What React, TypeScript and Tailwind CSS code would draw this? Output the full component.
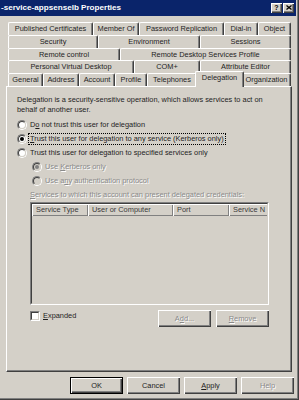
import React from 'react';

// Windows classic 3D edges
const raised = 'shadow-[inset_1px_1px_0_#fff,inset_-1px_-1px_0_#404040,inset_-2px_-2px_0_#808080]';
const sunkenOuter = 'border border-t-[#808080] border-l-[#808080] border-b-white border-r-white';
const sunkenInner = 'border border-t-[#404040] border-l-[#404040] border-b-[#d4d0c8] border-r-[#d4d0c8]';
const disabledText = 'text-[#8a8a8a] [text-shadow:1px_1px_0_#fff]';

const U: React.FC<{ children: React.ReactNode }> = ({ children }) => (
  <span className="underline decoration-1 underline-offset-[1px]">{children}</span>
);

interface TabDef {
  label: string;
  w: string;
}

const tabRows: TabDef[][] = [
  [
    { label: 'Published Certificates', w: 'w-[85px]' },
    { label: 'Member Of', w: 'w-[46px]' },
    { label: 'Password Replication', w: 'w-[85px]' },
    { label: 'Dial-in', w: 'w-[34px]' },
    { label: 'Object', w: 'w-[33px]' },
  ],
  [
    { label: 'Security', w: 'w-[90px]' },
    { label: 'Environment', w: 'w-[102px]' },
    { label: 'Sessions', w: 'w-[91px]' },
  ],
  [
    { label: 'Remote control', w: 'w-[112px]' },
    { label: 'Remote Desktop Services Profile', w: 'w-[171px]' },
  ],
  [
    { label: 'Personal Virtual Desktop', w: 'w-[126px]' },
    { label: 'COM+', w: 'w-[66px]' },
    { label: 'Attribute Editor', w: 'w-[91px]' },
  ],
];

const frontRow: TabDef[] = [
  { label: 'General', w: 'w-[35px]' },
  { label: 'Address', w: 'w-[36px]' },
  { label: 'Account', w: 'w-[36px]' },
  { label: 'Profile', w: 'w-[32px]' },
  { label: 'Telephones', w: 'w-[50px]' },
  { label: 'Delegation', w: 'w-[45px]' },
  { label: 'Organization', w: 'w-[49px]' },
];

const Tab: React.FC<TabDef> = ({ label, w }) => (
  <div
    className={`${w} shrink-0 flex items-center justify-center whitespace-nowrap overflow-hidden rounded-t-[2px] border-t border-l border-r border-t-white border-l-white border-r-[#404040] shadow-[inset_-1px_0_0_#808080]`}
  >
    {label}
  </div>
);

const Radio: React.FC<{ checked?: boolean; disabled?: boolean }> = ({ checked, disabled }) => (
  <span className={`w-[10px] h-[10px] shrink-0 rounded-full flex ${sunkenOuter}`}>
    <span
      className={`w-full h-full rounded-full flex items-center justify-center ${sunkenInner} ${
        disabled ? 'bg-[#d4d0c8]' : 'bg-white'
      }`}
    >
      {checked && <span className={`w-[4px] h-[4px] rounded-full ${disabled ? 'bg-[#808080]' : 'bg-black'}`} />}
    </span>
  </span>
);

const Button: React.FC<{ children: React.ReactNode; disabled?: boolean; isDefault?: boolean }> = ({
  children,
  disabled,
  isDefault,
}) => (
  <div
    className={`w-[53px] h-[17px] shrink-0 flex items-center justify-center bg-[#d4d0c8] ${raised} ${
      isDefault ? 'border border-black' : ''
    } ${disabled ? disabledText : ''}`}
  >
    {children}
  </div>
);

const columns = [
  { label: 'Service Type', w: 'w-[56px]' },
  { label: 'User or Computer', w: 'w-[85px]' },
  { label: 'Port', w: 'w-[56px]' },
  { label: 'Service N', w: 'w-[60px]' },
];

export default function App() {
  return (
    <div className="w-[299px] h-[400px] bg-[#d4d0c8] border-r border-b border-r-[#404040] border-b-[#404040] font-['Liberation_Sans',Arial,sans-serif] text-[7.4px] leading-[10px] text-[#1e1e1e] overflow-hidden">
      <div className="h-full border-r border-b border-r-[#808080] border-b-[#808080] pr-[1px] pb-[1px] flex flex-col">
        {/* title bar */}
        <div className="h-[16px] shrink-0 bg-[#0a246a] flex items-center pl-[1px] pr-[2px]">
          <span className="text-white font-bold text-[8.1px] whitespace-nowrap">-service-appsenselb Properties</span>
          <div className="ml-auto flex gap-[1px]">
            <div className={`w-[11px] h-[10px] bg-[#d4d0c8] ${raised} flex items-center justify-center font-bold text-[7px] leading-none text-black pb-[1px]`}>
              ?
            </div>
            <div className={`w-[11px] h-[10px] bg-[#d4d0c8] ${raised} flex items-center justify-center pb-[1px]`}>
              <svg width="6" height="5" viewBox="0 0 6 5">
                <path d="M0.5 0.5 L5.5 4.5 M5.5 0.5 L0.5 4.5" stroke="#000" strokeWidth="1.3" />
              </svg>
            </div>
          </div>
        </div>

        {/* tabs */}
        <div className="mt-[6px] ml-[8px] w-[283px] flex flex-col">
          {tabRows.map((row, i) => (
            <div key={i} className={`flex ${i === 2 ? 'h-[12px]' : 'h-[13px]'}`}>
              {row.map((t) => (
                <Tab key={t.label} {...t} />
              ))}
            </div>
          ))}
          <div className="flex h-[13px]">
            {frontRow.map((t) =>
              t.label === 'Delegation' ? (
                <div
                  key={t.label}
                  className="w-[49px] h-[16px] -mx-[2px] -mt-[2px] relative z-10 shrink-0 bg-[#d4d0c8] flex justify-center pt-[1px] whitespace-nowrap rounded-t-[2px] border-t border-l border-r border-t-white border-l-white border-r-[#404040] shadow-[inset_-1px_0_0_#808080]"
                >
                  {t.label}
                </div>
              ) : (
                <Tab key={t.label} {...t} />
              )
            )}
          </div>
        </div>

        {/* tab page */}
        <div className="ml-[6px] w-[286px] h-[286px] shrink-0 border border-t-white border-l-white border-r-[#404040] border-b-[#404040] shadow-[inset_-1px_-1px_0_#808080] pl-[10px] pt-[8px] flex flex-col">
          <p className="whitespace-nowrap">
            Delegation is a security-sensitive operation, which allows services to act on
            <br />
            behalf of another user.
          </p>

          <div className="mt-[3px] flex flex-col">
            <div className="h-[14px] flex items-center gap-[1px]">
              <Radio />
              <span className="ml-[1px] px-[1px] whitespace-nowrap">
                D<U>o</U> not trust this user for delegation
              </span>
            </div>
            <div className="h-[14px] flex items-center gap-[1px]">
              <Radio checked />
              <span className="px-[1px] h-[12px] leading-[10px] border border-dotted border-black whitespace-nowrap">
                <U>T</U>rust this user for delegation to any service (Kerberos only)
              </span>
            </div>
            <div className="h-[14px] flex items-center gap-[1px]">
              <Radio />
              <span className="ml-[1px] px-[1px] whitespace-nowrap">
                Trust this user for delegation to specified services only
              </span>
            </div>
            <div className="h-[14px] flex items-center gap-[1px] pl-[15px]">
              <Radio checked disabled />
              <span className={`ml-[1px] px-[1px] whitespace-nowrap ${disabledText}`}>
                Use <U>K</U>erberos only
              </span>
            </div>
            <div className="h-[14px] flex items-center gap-[1px] pl-[15px]">
              <Radio disabled />
              <span className={`ml-[1px] px-[1px] whitespace-nowrap ${disabledText}`}>
                Use a<U>n</U>y authentication protocol
              </span>
            </div>
          </div>

          <div className={`mt-[1px] h-[12px] ml-[13px] flex items-center whitespace-nowrap ${disabledText}`}>
            <U>S</U>ervices to which this account can present delegated credentials:
          </div>

          <div className={`mt-[1px] ml-[13px] w-[239px] h-[103px] shrink-0 flex ${sunkenOuter}`}>
            <div className={`w-full h-full overflow-hidden ${sunkenInner}`}>
              <div className="flex h-[12px] whitespace-nowrap">
                {columns.map((c) => (
                  <div
                    key={c.label}
                    className={`${c.w} shrink-0 h-full flex items-center pl-[4px] text-[#3a3a3a] shadow-[inset_1px_1px_0_#fff,inset_-1px_-1px_0_#808080]`}
                  >
                    {c.label}
                  </div>
                ))}
              </div>
            </div>
          </div>

          <div className="mt-[5px] ml-[13px] w-[239px] flex items-start">
            <div className="mt-[1px] flex items-center gap-[3px]">
              <span className={`w-[10px] h-[10px] flex ${sunkenOuter}`}>
                <span className={`w-full h-full bg-white ${sunkenInner}`} />
              </span>
              <span className="whitespace-nowrap">
                <U>E</U>xpanded
              </span>
            </div>
            <div className="ml-auto flex gap-[5px]">
              <Button disabled>
                A<U>d</U>d...
              </Button>
              <Button disabled>
                <U>R</U>emove
              </Button>
            </div>
          </div>
        </div>

        {/* dialog buttons */}
        <div className="mt-[5px] pr-[2px] flex justify-end gap-[4px]">
          <Button isDefault>OK</Button>
          <Button>Cancel</Button>
          <Button>
            <U>A</U>pply
          </Button>
          <Button disabled>Help</Button>
        </div>
      </div>
    </div>
  );
}
